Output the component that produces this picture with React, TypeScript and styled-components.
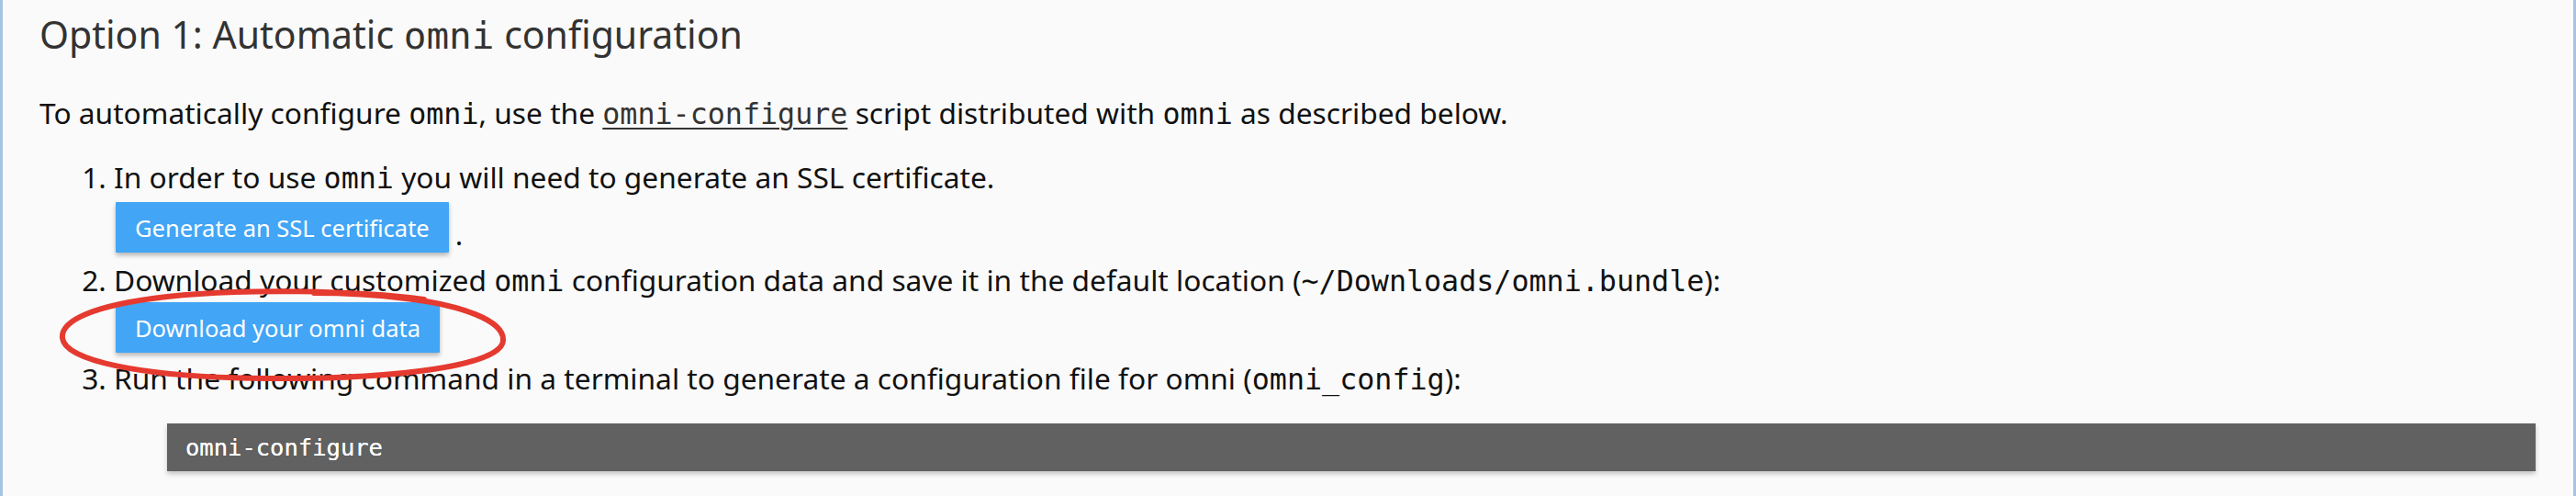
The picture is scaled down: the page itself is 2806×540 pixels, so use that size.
import React from "react";
import styled, { createGlobalStyle } from "styled-components";

const Global = createGlobalStyle`
  html, body { margin: 0; padding: 0; background: #ffffff; }
  body { font-family: "Noto Sans", "Open Sans", "Liberation Sans", sans-serif; }
`;

const Page = styled.div`
  box-sizing: border-box;
  width: 2806px;
  height: 540px;
  overflow: hidden;
  background: #fafafa;
  border-left: 3px solid #a9c3e3;
  border-right: 3px solid #a9c3e3;
  padding: 16px 41px 0 40px;
  color: #111;
`;

const Heading = styled.h3`
  margin: 0;
  font-size: 41px;
  line-height: 43px;
  font-weight: 400;
  color: #333;
`;

const Mono = styled.code`
  font-family: "DejaVu Sans Mono", "Liberation Mono", monospace;
  font-size: 1em;
`;

const Paragraph = styled.p`
  margin: 42px 0 0 0;
  font-size: 31.7px;
  line-height: 40px;
`;

const CodeLink = styled.a`
  color: #333;
  text-decoration: underline;
  text-underline-offset: 4px;
  text-decoration-thickness: 2px;
`;

const Steps = styled.ol`
  margin: 29px 0 0 0;
  padding: 0 0 0 81px;
  font-size: 31.7px;
  line-height: 40px;
`;

const Step = styled.li`
  margin: 0;
`;

const ButtonLine = styled.div<{ $top: number; $bottom: number }>`
  display: flex;
  align-items: flex-end;
  margin: ${(p) => p.$top}px 0 ${(p) => p.$bottom}px 2px;
`;

const ButtonWrap = styled.span`
  position: relative;
  display: inline-flex;
`;

const Button = styled.button`
  box-sizing: border-box;
  height: 55px;
  padding: 0 21px;
  border: none;
  border-radius: 1px;
  background: #42a5f5;
  color: #ffffff;
  font-family: "Noto Sans", "Open Sans", "Liberation Sans", sans-serif;
  font-size: 25.5px;
  box-shadow: 0 3px 5px rgba(0, 0, 0, 0.28);
  cursor: pointer;
`;

const Period = styled.span`
  margin-left: 7px;
  line-height: 40px;
`;

const Circle = styled.svg`
  position: absolute;
  left: -64px;
  top: -15px;
  width: 490px;
  height: 102px;
  overflow: visible;
  pointer-events: none;
`;

const CodeBlock = styled.pre`
  box-sizing: border-box;
  margin: 28px 0 0 58px;
  height: 52px;
  padding: 0 20px;
  background: #616161;
  color: #ffffff;
  font-family: "DejaVu Sans Mono", "Liberation Mono", monospace;
  font-size: 25.5px;
  line-height: 52px;
  text-shadow: 0 0 0.6px #ffffff;
  box-shadow: 0 3px 5px rgba(0, 0, 0, 0.22);
`;

export default function App() {
  return (
    <>
      <Global />
      <Page>
        <Heading>
          Option 1: Automatic <Mono>omni</Mono> configuration
        </Heading>
        <Paragraph>
          To automatically configure <Mono>omni</Mono>, use the{" "}
          <CodeLink href="#">
            <Mono>omni-configure</Mono>
          </CodeLink>{" "}
          script distributed with <Mono>omni</Mono> as described below.
        </Paragraph>
        <Steps>
          <Step>
            In order to use <Mono>omni</Mono> you will need to generate an SSL certificate.
            <ButtonLine $top={6} $bottom={10}>
              <ButtonWrap>
                <Button>Generate an SSL certificate</Button>
              </ButtonWrap>
              <Period>.</Period>
            </ButtonLine>
          </Step>
          <Step>
            Download your customized <Mono>omni</Mono> configuration data and save it in the default
            location (<Mono>~/Downloads/omni.bundle</Mono>):
            <ButtonLine $top={3} $bottom={8}>
              <ButtonWrap>
                <Button>Download your omni data</Button>
                <Circle viewBox="0 0 490 102">
                  <path
                    d="M 400 12 C 330 2, 200 0, 120 9 C 40 18, 4 35, 6 54 C 8 78, 90 97, 230 98 C 370 99, 484 84, 486 57 C 488 35, 440 18, 380 11 C 340 6, 300 5, 280 5"
                    fill="none"
                    stroke="#e53a2f"
                    strokeWidth="6"
                    strokeLinecap="round"
                  />
                </Circle>
              </ButtonWrap>
            </ButtonLine>
          </Step>
          <Step>
            Run the following command in a terminal to generate a configuration file for omni (
            <Mono>omni_config</Mono>):
            <CodeBlock>omni-configure</CodeBlock>
          </Step>
        </Steps>
      </Page>
    </>
  );
}
